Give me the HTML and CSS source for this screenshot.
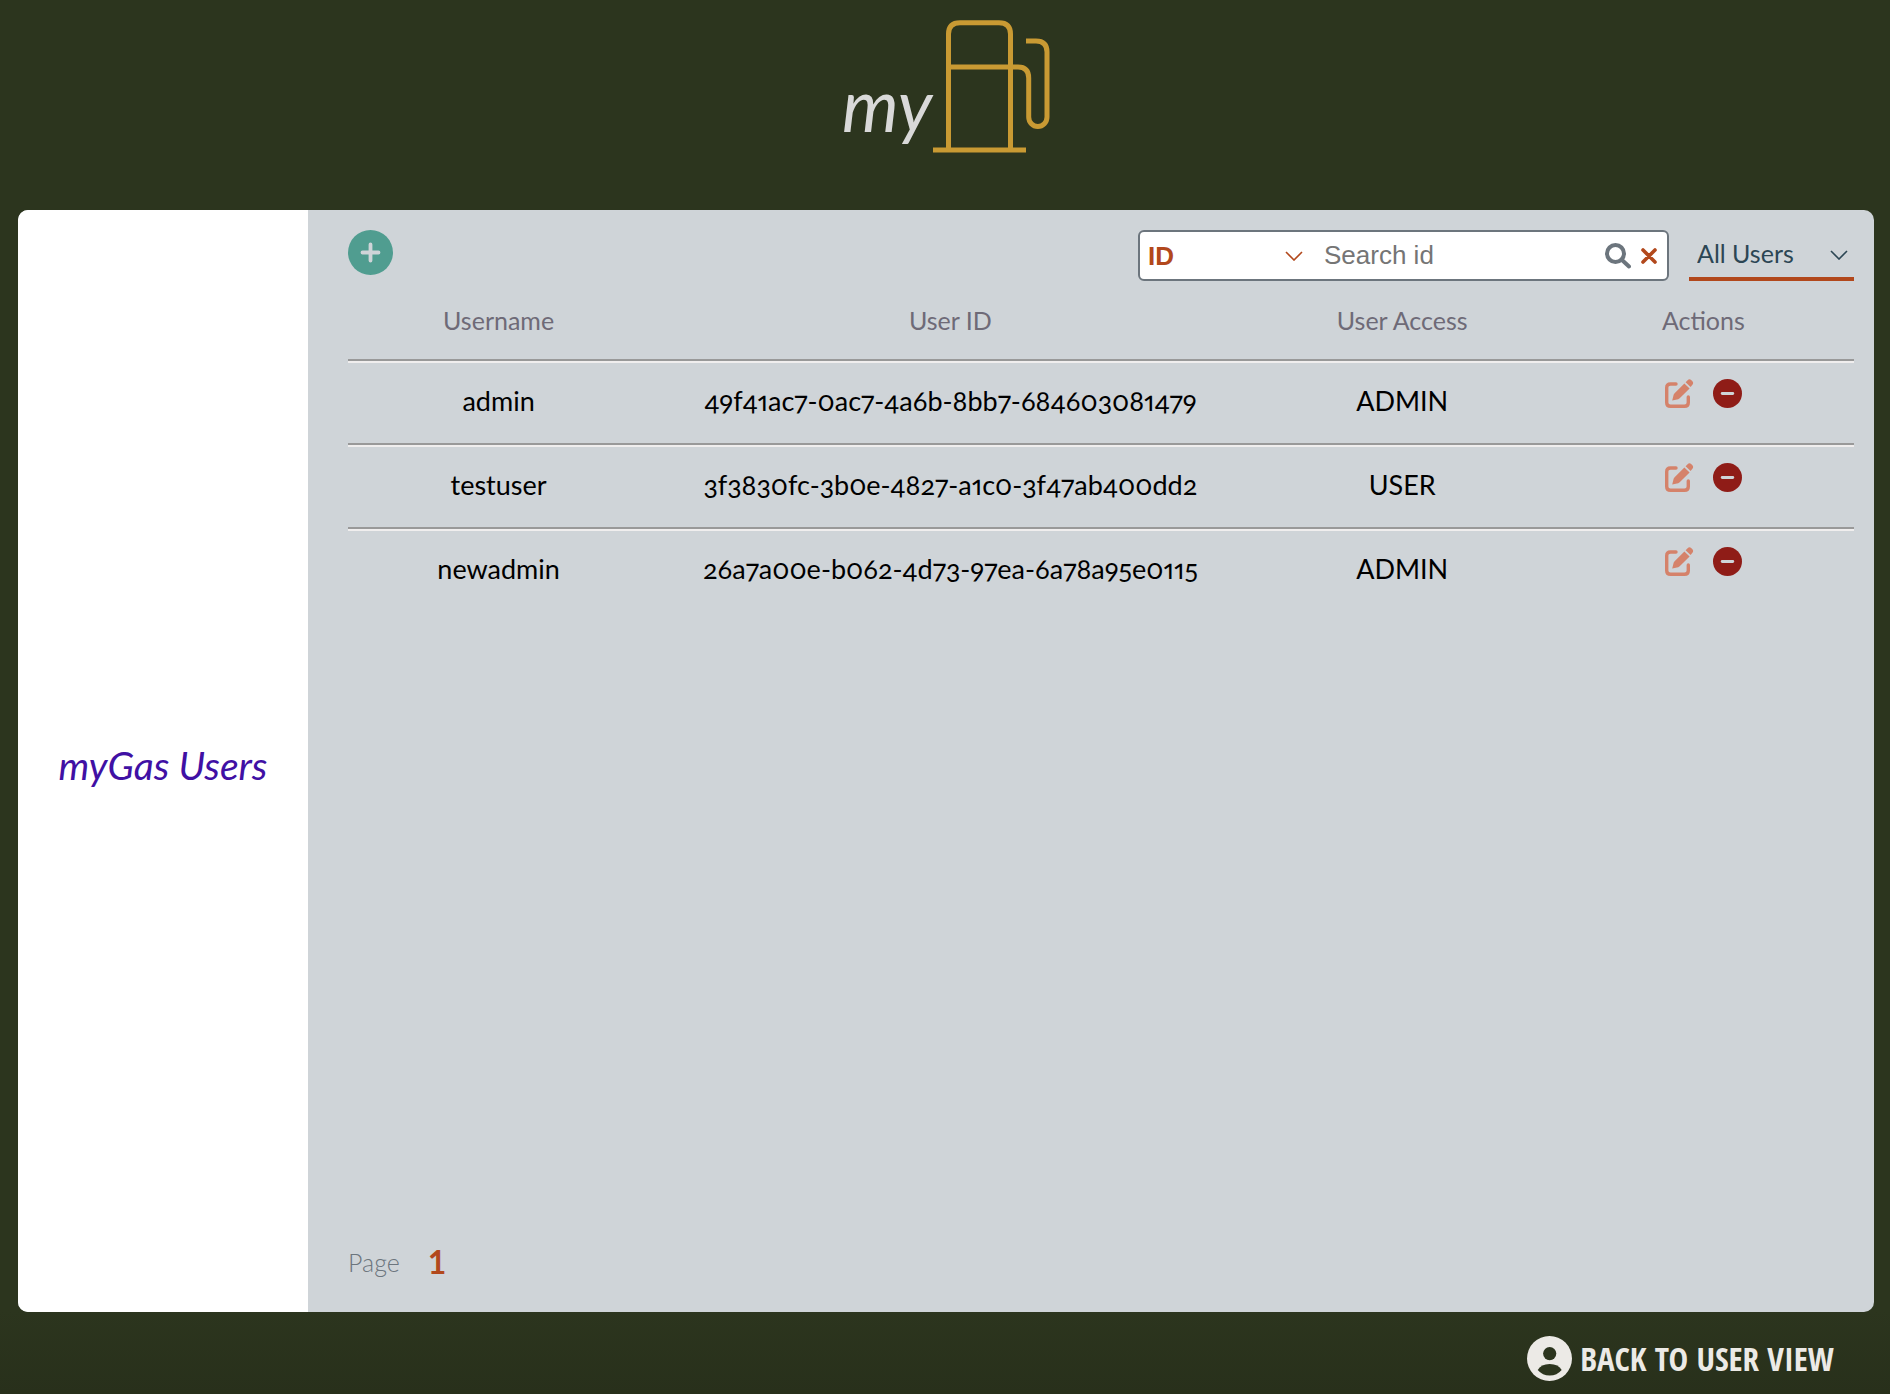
FILE: index.html
```html
<!DOCTYPE html>
<html lang="en">
<head>
<meta charset="utf-8">
<meta name="viewport" content="width=device-width, initial-scale=1">
<title>myGas Users</title>
<link rel="stylesheet" href="styles.css">
</head>
<body>
<svg class="sprite" aria-hidden="true">
  <symbol id="edit" viewBox="0 0 29 29">
    <path d="M11 5H5.500Q1.700 5 1.700 8.800V23.500Q1.700 27.300 5.500 27.300H19.500Q23.300 27.300 23.300 23.500V18" fill="none" stroke="currentColor" stroke-width="3.400" stroke-linecap="round"/>
    <path d="M7.200 21.600L8.700 15.600Q9 14.800 9.600 14.200L19.400 4.400L24.600 9.400L14.700 19.200Q14 19.900 13.200 20.200Z" fill="currentColor"/>
    <path d="M20.600 3.200L22.600 1.200Q24.400-.6 26.400 1.200L27.200 2Q29 4 27.400 5.800L25.600 8Z" fill="currentColor"/>
  </symbol>
  <symbol id="remove" viewBox="0 0 29 29">
    <circle cx="14.500" cy="14.500" r="14.500" fill="currentColor"/>
    <path d="M9.200 14.500H19.800" stroke="#cfd4d8" stroke-width="2.800" stroke-linecap="round"/>
  </symbol>
  <symbol id="chevron" viewBox="0 0 18 10">
    <path d="M1 1L9 9L17 1" fill="none" stroke="currentColor" stroke-width="1.600"/>
  </symbol>
</svg>

<header class="masthead">
  <svg class="logo" viewBox="0 0 210 210" role="img" aria-label="myGas">
    <text class="logo-text" x="2" y="132">my</text>
    <g fill="none" stroke="#c99a33" stroke-width="5">
      <path d="M108.500 150V34Q108.500 22.700 120 22.700H159Q170.500 22.700 170.500 34V150"/>
      <path d="M93 150H186"/>
      <path d="M108.500 67H178Q188.700 67 188.700 78V117A9.150 9.500 0 0 0 207 117V52Q207 41 196 41H186"/>
    </g>
  </svg>
</header>

<main class="panel">
  <aside class="sidebar"><h1 class="title">myGas Users</h1></aside>
  <section class="content">
    <div class="toolbar">
      <button class="icon-button add" type="button" aria-label="Add user">
        <svg viewBox="0 0 45 45"><circle cx="22.500" cy="22.500" r="22.500" fill="currentColor"/><path d="M22.500 14.500V30.500M14.500 22.500H30.500" stroke="#cfd4d8" stroke-width="3.800" stroke-linecap="round"/></svg>
      </button>
      <form class="search">
        <div class="picker field">
          <select aria-label="Search field"><option>ID</option><option>Username</option></select>
          <svg class="chevron"><use href="#chevron"/></svg>
        </div>
        <input class="query" type="text" placeholder="Search id" aria-label="Search id">
        <button class="icon-button find" type="submit" aria-label="Search">
          <svg viewBox="0 0 26 26"><g fill="none" stroke="currentColor" stroke-width="4"><circle cx="10.500" cy="10.500" r="8.500"/><path d="M17 17L24 23.500" stroke-linecap="round"/></g></svg>
        </button>
        <button class="icon-button clear" type="reset" aria-label="Clear">
          <svg viewBox="0 0 16 16"><path d="M2 2L14 14M14 2L2 14" stroke="currentColor" stroke-width="3.600" stroke-linecap="round"/></svg>
        </button>
      </form>
      <div class="picker filter">
        <select aria-label="User filter"><option>All Users</option></select>
        <svg class="chevron"><use href="#chevron"/></svg>
      </div>
    </div>

    <table class="users">
      <colgroup><col class="narrow"><col class="wide"><col class="narrow"><col class="narrow"></colgroup>
      <thead><tr><th>Username</th><th>User ID</th><th>User Access</th><th>Actions</th></tr></thead>
      <tbody>
        <tr><td>admin</td><td>49f41ac7-0ac7-4a6b-8bb7-684603081479</td><td>ADMIN</td>
          <td><div class="actions"><button class="icon-button edit" type="button" aria-label="Edit admin"><svg><use href="#edit"/></svg></button><button class="icon-button remove" type="button" aria-label="Remove admin"><svg><use href="#remove"/></svg></button></div></td></tr>
        <tr><td>testuser</td><td>3f3830fc-3b0e-4827-a1c0-3f47ab400dd2</td><td>USER</td>
          <td><div class="actions"><button class="icon-button edit" type="button" aria-label="Edit testuser"><svg><use href="#edit"/></svg></button><button class="icon-button remove" type="button" aria-label="Remove testuser"><svg><use href="#remove"/></svg></button></div></td></tr>
        <tr><td>newadmin</td><td>26a7a00e-b062-4d73-97ea-6a78a95e0115</td><td>ADMIN</td>
          <td><div class="actions"><button class="icon-button edit" type="button" aria-label="Edit newadmin"><svg><use href="#edit"/></svg></button><button class="icon-button remove" type="button" aria-label="Remove newadmin"><svg><use href="#remove"/></svg></button></div></td></tr>
      </tbody>
    </table>

    <nav class="pages" aria-label="Pages"><span>Page</span><a href="#" aria-current="page">1</a></nav>
  </section>
</main>

<footer class="footer">
  <a class="back" href="#">
    <svg viewBox="0 0 45 45" aria-hidden="true"><circle cx="22.500" cy="22.500" r="22.500" fill="#eceae6"/><g fill="#2c351e"><circle cx="22.700" cy="17.600" r="6.600"/><path d="M10.700 34Q14 28 22.700 28Q31.500 28 34.700 34Q30 39.500 22.700 39.500Q15.500 39.500 10.700 34Z"/></g></svg>
    <span>BACK TO USER VIEW</span>
  </a>
</footer>
</body>
</html>
```
FILE: styles.css
```css
* { box-sizing: border-box; }

body {
  margin: 0;
  min-height: 100vh;
  display: flex;
  flex-direction: column;
  background: linear-gradient(#2c351e 94%, #28301b);
  font-family: Lato, "Noto Sans", sans-serif;
  color: #000;
}

.sprite { position: absolute; width: 0; height: 0; }

button, select, input { font: inherit; border: 0; margin: 0; padding: 0; background: none; }

.masthead { display: flex; justify-content: center; }
.logo { width: 210px; height: 210px; }
.logo-text { font-size: 72px; font-style: italic; fill: #d9d9d9; }

.panel {
  flex: 1;
  display: flex;
  margin: 0 16px 0 18px;
  border-radius: 10px;
  overflow: hidden;
  background: #cfd4d8;
}

.sidebar {
  width: 290px;
  display: flex;
  align-items: center;
  justify-content: center;
  background: #fff;
}
.title { margin: 0; padding-top: 8px; font-size: 39px; font-style: italic; font-weight: 400; color: #4010a4; }

.content {
  flex: 1;
  min-width: 0;
  display: flex;
  flex-direction: column;
  padding: 20px 20px 34px 40px;
}

.toolbar { display: flex; gap: 20px; align-items: flex-start; }

.icon-button { display: block; line-height: 0; cursor: pointer; }
.icon-button svg { display: block; width: 100%; height: 100%; }
.add { width: 45px; height: 45px; margin-right: auto; color: #509d90; }

.search {
  display: flex;
  align-items: center;
  width: 531px;
  height: 51px;
  padding: 0 10px 0 8px;
  border: 2px solid #6c757d;
  border-radius: 6px;
  background: #fff;
  font: 26px "Liberation Sans", Arial, sans-serif;
}

.picker { display: grid; align-items: center; }
.picker select { grid-area: 1 / 1; width: 100%; color: inherit; appearance: none; }
.chevron { grid-area: 1 / 1; justify-self: end; width: 18px; height: 10px; pointer-events: none; }

.field { width: 155px; color: #b2481c; font-weight: 700; }
.query { flex: 1; min-width: 0; margin-left: 21px; color: #222; }
.query::placeholder { color: #757575; }
.find { width: 26px; height: 26px; color: #6c757d; }
.clear { width: 16px; height: 16px; margin-left: 10px; color: #b2481c; }

.filter {
  width: 165px;
  height: 51px;
  padding: 2px 6px 0 8px;
  border-bottom: 4px solid #b2481c;
  color: #2c4654;
  font-size: 25px;
}
.filter select { padding-bottom: 4px; }

.users { width: 100%; table-layout: fixed; border-spacing: 0; text-align: center; }
.narrow { width: 20%; }
.wide { width: 40%; }
.users th {
  padding: 23px 0;
  font-size: 25px;
  line-height: 32px;
  font-weight: 400;
  color: #6e6a77;
}
.users td {
  padding: 18px 0 20px;
  border-top: 2px solid #999;
  box-shadow: inset 0 2px #f0eeee;
  font-size: 27px;
  font-variant-numeric: oldstyle-nums proportional-nums;
  line-height: 44px;
  vertical-align: top;
}

.actions { display: flex; justify-content: center; gap: 19px; }
.edit, .remove { width: 29px; height: 29px; }
.edit { color: #d5826a; }
.remove { color: #8f1c17; }

.pages { display: flex; align-items: center; gap: 28px; margin-top: auto; font-size: 25px; font-weight: 300; line-height: 32px; color: #6c757d; }
.pages a { font-size: 32px; font-weight: 700; color: #b2481c; text-decoration: none; }

.footer { display: flex; justify-content: flex-end; padding: 24px 56px 13px; }
.back {
  display: flex;
  align-items: center;
  gap: 8px;
  font-family: "Open Sans Condensed", "Roboto Condensed", "Liberation Sans Narrow", sans-serif;
  font-size: 33px;
  font-weight: 700;
  line-height: 45px;
  color: #eceae6;
  text-decoration: none;
}
.back svg { width: 45px; height: 45px; }
```
